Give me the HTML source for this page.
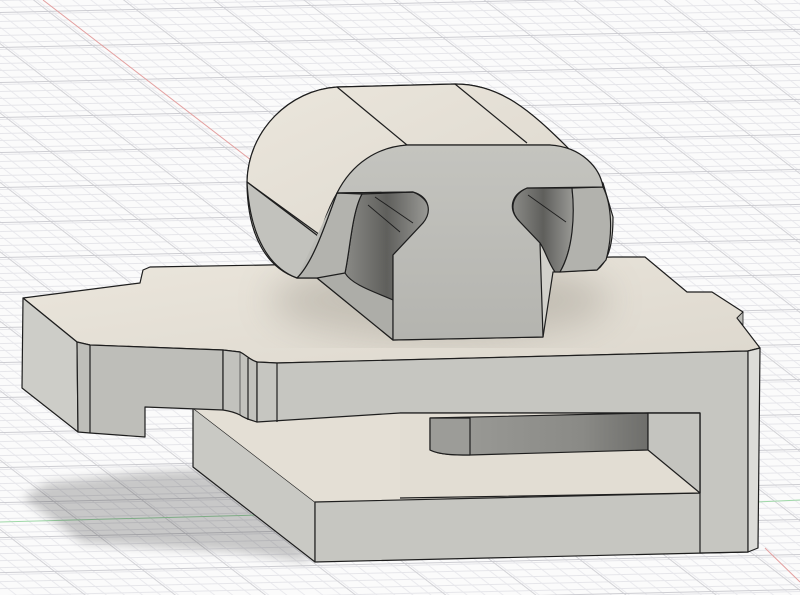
<!DOCTYPE html>
<html><head><meta charset="utf-8"><style>
html,body{margin:0;padding:0;background:#fbfbfb;}
svg{display:block}
</style></head><body>
<svg width="800" height="595" viewBox="0 0 800 595" xmlns="http://www.w3.org/2000/svg">
<defs>
<pattern id="hmin" width="800" height="7" patternUnits="userSpaceOnUse" patternTransform="rotate(-1.3)">
<line x1="0" y1="0.5" x2="800" y2="0.5" stroke="#e6e6ea" stroke-width="1"/></pattern>
<pattern id="hmaj" width="800" height="35" patternUnits="userSpaceOnUse" patternTransform="rotate(-1.3) translate(0,12)">
<line x1="0" y1="0.5" x2="800" y2="0.5" stroke="#cdcdd2" stroke-width="1"/></pattern>
<pattern id="dmin" width="11" height="10" patternUnits="userSpaceOnUse" patternTransform="rotate(-52.4)">
<line x1="0.5" y1="0" x2="0.5" y2="10" stroke="#eaeaee" stroke-width="1"/></pattern>
<pattern id="dmaj" width="55" height="10" patternUnits="userSpaceOnUse" patternTransform="rotate(-52.4) translate(20,0)">
<line x1="0.5" y1="0" x2="0.5" y2="10" stroke="#d3d3d7" stroke-width="1"/></pattern>
<linearGradient id="top" x1="0" y1="0" x2="1" y2="1">
<stop offset="0" stop-color="#ebe6dc"/><stop offset="1" stop-color="#ddd8ce"/></linearGradient>
<linearGradient id="front" x1="0" y1="0" x2="0" y2="1">
<stop offset="0" stop-color="#c4c4bf"/><stop offset="1" stop-color="#b4b4af"/></linearGradient>
<linearGradient id="hole" x1="0" y1="0" x2="1" y2="0">
<stop offset="0" stop-color="#8a8a86"/><stop offset="0.5" stop-color="#5f5f5c"/><stop offset="1" stop-color="#9a9a96"/></linearGradient>
<linearGradient id="back" x1="0" y1="0" x2="1" y2="0">
<stop offset="0" stop-color="#9d9d99"/><stop offset="0.7" stop-color="#8a8a86"/><stop offset="1" stop-color="#6e6e6b"/></linearGradient>
<filter id="blur"><feGaussianBlur stdDeviation="5"/></filter>
<filter id="blur2"><feGaussianBlur stdDeviation="18"/></filter>
<clipPath id="topclip"><path d="M23,298 L140,283 L143,270 L150,267 L267,265 L613,257 L645,257 L687,292 L712,292 L743,312 L737,318 L760,348 L748,351 L400,360 L277,363 L257,362 C250,360 246,355 240,352 L223,350 L90,345 L77,342 Z"/></clipPath>
</defs>
<rect width="800" height="595" fill="#fbfbfb"/>
<rect width="800" height="595" fill="url(#dmin)"/>
<rect width="800" height="595" fill="url(#hmin)"/>
<rect width="800" height="595" fill="url(#dmaj)"/>
<rect width="800" height="595" fill="url(#hmaj)"/>
<line x1="43" y1="0" x2="260" y2="167" stroke="#e3a0a0" stroke-width="1"/>
<line x1="765" y1="548" x2="800" y2="582" stroke="#e3a0a0" stroke-width="1"/>
<line x1="0" y1="522" x2="260" y2="515" stroke="#9fd8a8" stroke-width="1"/>
<line x1="757" y1="502" x2="800" y2="500" stroke="#9fd8a8" stroke-width="1"/>
<path d="M23,498 L47,483 L143,472 L193,470 L240,480 L313,562 L233,552 L83,543 Z" fill="#000" opacity="0.2" filter="url(#blur)"/>

<g stroke="#1e1e1e" stroke-width="1.2" stroke-linejoin="round">
<path d="M193,408 L315,502 L315,562 L193,467 Z" fill="#c9c9c4"/>
<path d="M193,408 L400,413 L700,413 L700,493 L315,502 Z" fill="#e4dfd5" stroke="none"/>
<path d="M315,502 L700,493 L748,350 L748,552 L315,562 Z" fill="#c6c6c1"/>
<path d="M23,298 L140,283 L143,270 L150,267 L267,265 L613,257 L645,257 L687,292 L712,292 L743,312 L737,318 L760,348 L748,351 L400,360 L277,363 L257,362 C250,360 246,355 240,352 L223,350 L90,345 L77,342 Z" fill="url(#top)"/>
<g clip-path="url(#topclip)" stroke="none">
<ellipse cx="440" cy="300" rx="170" ry="40" fill="#8a857a" opacity="0.35" filter="url(#blur2)"/>
</g>
<path d="M737,318 L743,312 L743,325 Z" fill="#bdbdb8" stroke-width="0.8"/>
<path d="M23,298 L77,342 L78,432 L22,388 Z" fill="#cdcdc8"/>
<path d="M77,342 L90,345 L223,350 L223,410 L145,407 L145,437 L90,433 L78,432 Z" fill="#bebeb9"/>
<line x1="90" y1="345" x2="90" y2="433"/>
<path d="M223,350 L240,352 C246,355 250,360 257,362 L257,422 C250,420 244,418 240,415 C236,413 230,411 223,410 Z" fill="#c2c2bd"/>
<line x1="248" y1="358" x2="248" y2="420"/>
<line x1="240" y1="352" x2="240" y2="415" stroke-width="0.6"/>
<path d="M257,362 L277,363 L748,351 L748,552 L700,553 L700,413 L400,413 L257,422 Z" fill="#c6c6c1"/>
<line x1="277" y1="363" x2="277" y2="422"/>
<path d="M748,351 L760,348 L758,548 L748,552 Z" fill="#dcdcd8"/>
<path d="M400,413 L700,413 L700,493 L400,498 Z" fill="#e2ddd3" stroke="none"/>
<path d="M430,418 L648,413 L648,450 L470,455 C455,455 440,455 430,450 Z" fill="url(#back)"/>
<path d="M430,418 L470,418 L470,455 C455,455 440,455 430,450 Z" fill="#9c9c98"/>
<path d="M648,413 L700,413 L700,493 L648,450 Z" fill="#c4c4bf"/>
<path d="M400,413 L700,413 L700,493 L400,498" fill="none"/>

<path d="M297,278 C268,268 248,238 247,185 C247,130 290,90 337,87 L455,84 C500,84 530,110 570,150 L603,183 L613,217 C613,240 610,260 597,270 L553,272 L543,337 L393,340 L317,278 Z" fill="#d2d1cb"/>
<path d="M247,182 C248,130 290,90 337,87 L455,84 C500,84 530,110 570,150 L550,145 L407,145 C365,150 335,180 320,235 Z" fill="url(#top)"/>
<line x1="337" y1="87" x2="407" y2="145"/>
<line x1="455" y1="84" x2="527" y2="143"/>
<line x1="247" y1="182" x2="318" y2="236"/>
<path d="M247,182 L318,236 C312,255 305,272 297,278 C270,268 250,238 247,182 Z" fill="#c2c2bd"/>
<path d="M317,278 L393,255 L393,340 Z" fill="#adadA8"/>
<path d="M362,194 L413,192 C432,200 432,215 423,223 L393,255 L393,300 C375,292 352,285 345,273 C350,250 352,212 362,194 Z" fill="url(#hole)"/>
<line x1="368" y1="205" x2="400" y2="232" stroke-width="0.9"/>
<line x1="375" y1="197" x2="413" y2="223" stroke-width="0.9"/>
<path d="M527,188 L572,188 C575,210 575,245 560,272 L555,272 C548,262 545,250 540,243 L520,222 C508,210 512,195 527,188 Z" fill="url(#hole)"/>
<line x1="528" y1="195" x2="566" y2="222" stroke-width="0.9"/>
<path d="M572,188 L603,187 C612,205 613,235 606,260 L597,270 L560,272 C573,250 575,215 572,188 Z" fill="#b2b2ad"/>
<path d="M337,193 L362,194 C352,212 350,250 345,273 L317,278 L297,278 C313,262 324,228 337,193 Z" fill="#b3b3ae"/>
<path d="M297,278 C313,262 324,228 337,193 C352,163 378,147 407,145 L550,145 C582,147 600,168 603,187 L527,188 C510,195 508,210 520,222 L540,243 L543,337 L393,340 L393,255 L423,223 C432,212 430,197 413,192 L337,193" fill="url(#front)"/>
<path d="M337,193 L413,192" fill="none"/>
</g>
</svg>
</body></html>
